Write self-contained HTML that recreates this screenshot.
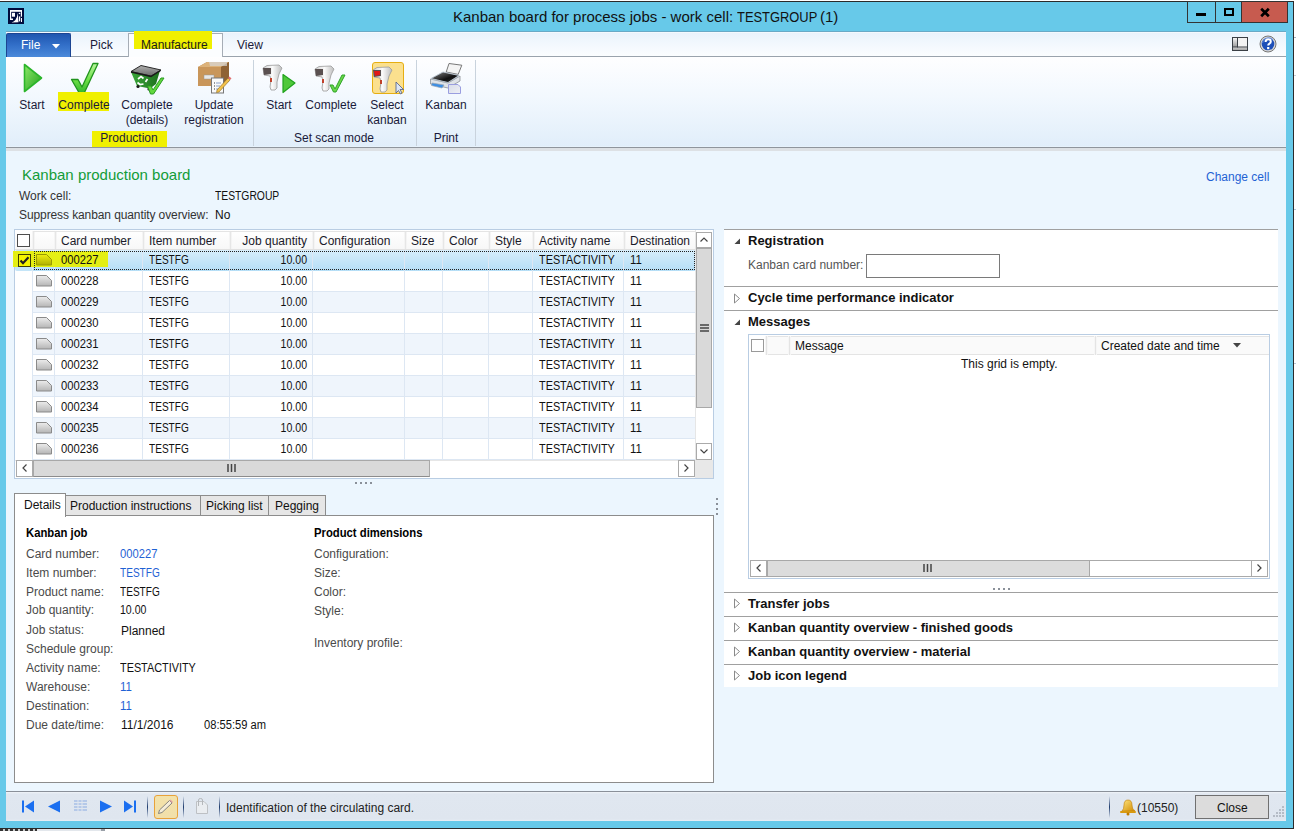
<!DOCTYPE html>
<html><head><meta charset="utf-8">
<style>
*{margin:0;padding:0;box-sizing:border-box}
html,body{width:1296px;height:831px;overflow:hidden;background:#fff;font-family:"Liberation Sans",sans-serif;font-size:12px;color:#1e1e1e}
.a{position:absolute;white-space:nowrap}
svg{position:absolute;overflow:visible}
#win{position:absolute;left:0;top:1px;width:1294px;height:828px;background:#67c9e9;border-top:1px solid #2b2b2b;border-right:1px solid #2b2b2b;border-bottom:1px solid #2b2b2b}
.rl{position:absolute;text-align:center;line-height:15px;color:#1a1a3a}
.hd{color:#1a1a2a}
.cell{color:#111}
.gl{position:absolute;text-align:center;line-height:15px;color:#1a1a3a}
</style></head><body>
<div id="win"></div>
<!-- title bar -->
<svg style="left:8px;top:8px" width="16" height="16" viewBox="0 0 16 16">
<rect x="0" y="0" width="16" height="16" fill="#000c3c"/>
<rect x="2" y="2" width="12" height="1.8" fill="#fff"/>
<rect x="2" y="2" width="1.2" height="10" fill="#fff"/>
<rect x="2" y="10.5" width="3" height="1.5" fill="#fff"/>
<rect x="12.8" y="2" width="1.2" height="6.7" fill="#fff"/>
<rect x="4" y="4.8" width="3" height="3.9" fill="#fff"/>
<path d="M3.4 14.6 Q8.5 13.5 9.9 5 L10.5 14.2 Z" fill="#fff"/>
<rect x="11" y="8.4" width="1.2" height="5" fill="#fff"/>
<rect x="13" y="10" width="1" height="4" fill="#fff"/>
<circle cx="11.5" cy="5.5" r=".8" fill="#fff"/>
</svg>
<div class="a" id="title" style="left:453px;top:7.5px;font-size:15px;color:#111">Kanban board for process jobs - work cell:</div>
<div class="a" style="left:737px;top:7.5px;font-size:15px;color:#111;transform:scaleX(.845);transform-origin:left top;--p:1;transform:scaleX(0.86);transform-origin:left top">TESTGROUP</div>
<div class="a" style="left:820px;top:7.5px;font-size:15px;color:#111">(1)</div>
<div class="a" style="left:1187px;top:1px;width:29px;height:22px;border:1px solid #333;background:#67c9e9"></div>
<div class="a" style="left:1215px;top:1px;width:27px;height:22px;border:1px solid #333;background:#67c9e9"></div>
<div class="a" style="left:1241px;top:1px;width:47px;height:22px;border:1px solid #333;background:#c75b4f"></div>
<div class="a" style="left:1196px;top:13px;width:10px;height:3px;background:#000"></div>
<div class="a" style="left:1224px;top:8px;width:10px;height:8px;border:2px solid #000"></div>
<svg style="left:1260px;top:7.5px" width="10" height="9" viewBox="0 0 10 9"><path d="M1.2 0.8 L8.8 8.2 M8.8 0.8 L1.2 8.2" stroke="#000" stroke-width="2.7"/></svg>

<!-- content bg -->
<div class="a" style="left:6px;top:31px;width:1280px;height:790px;background:#ecf6fe"></div>
<!-- tab bar -->
<div class="a" style="left:6px;top:31px;width:1280px;height:26px;background:linear-gradient(#fff,#fff 1px,#eaf3fc 2px,#fbfdff);border-bottom:1px solid #9aa3ad"></div>
<div class="a" style="left:6px;top:31px;width:1280px;height:1px;background:#6aa9c6"></div>
<div class="a" style="left:6px;top:33px;width:65px;height:24px;background:linear-gradient(#1f56b0,#3370c9 50%,#4c8ada);border:1px solid #1b4592;border-bottom:none;border-radius:2px 2px 0 0"></div>
<div class="a" style="left:21px;top:38px;font-size:12px;color:#fff">File</div>
<svg style="left:52px;top:44px" width="8" height="5"><path d="M0 0h8L4 4.5z" fill="#fff"/></svg>
<div class="a" style="left:90px;top:38px;font-size:12px;color:#1a1a3a">Pick</div>
<div class="a" style="left:128px;top:33px;width:95px;height:25px;background:#fbfdff;border:1px solid #a6adb6;border-bottom:none"></div>
<div class="a" style="left:134px;top:31px;width:78px;height:18px;background:#f0f000"></div>
<div class="a" style="left:141px;top:38px;font-size:12px;color:#1a1a1a">Manufacture</div>
<div class="a" style="left:237px;top:38px;font-size:12px;color:#1a1a3a">View</div>
<!-- layout icon -->
<svg style="left:1232px;top:37px" width="16" height="14" viewBox="0 0 16 14">
<defs><linearGradient id="lb" x1="0" y1="0" x2="0" y2="1"><stop offset="0" stop-color="#f4f4f4"/><stop offset="1" stop-color="#9a9a9a"/></linearGradient>
<linearGradient id="bb" x1="0" y1="0" x2="0" y2="1"><stop offset="0" stop-color="#c8c8c8"/><stop offset="1" stop-color="#a8a8a8"/></linearGradient></defs>
<rect x="0.5" y="0.5" width="15" height="13" fill="#f2f2f2" stroke="#3a3f45"/>
<rect x="1" y="1" width="4" height="9" fill="url(#lb)"/>
<rect x="1" y="10.5" width="14" height="2.5" fill="url(#bb)"/>
<path d="M5.5 1v9.5M1 10h14" stroke="#3a3f45" fill="none"/>
</svg>
<!-- help icon -->
<svg style="left:1259px;top:35px" width="18" height="18" viewBox="0 0 18 18">
<circle cx="9" cy="9" r="8" fill="#d8d8d8" stroke="#777" stroke-width="1"/>
<circle cx="9" cy="9" r="6.3" fill="#1d4fb8"/>
<path d="M3.5 8 A6 6 0 0 1 14 5" stroke="#6d95e0" stroke-width="1.5" fill="none" opacity=".6"/>
<path d="M6.6 7 Q6.6 4.3 9.2 4.3 Q11.8 4.3 11.8 6.6 Q11.8 8 10.2 8.8 Q9.2 9.4 9.2 10.6" stroke="#fff" stroke-width="2" fill="none"/>
<rect x="8.1" y="12" width="2.2" height="2.2" fill="#fff"/>
</svg>

<!-- ribbon -->
<div class="a" style="left:6px;top:57px;width:1280px;height:90px;background:linear-gradient(#fefeff,#f2f8fe 45%,#e1eefa 99%,#eef7fd)"></div>
<div class="a" style="left:6px;top:147px;width:1280px;height:1px;background:#8f959c"></div>
<div class="a" style="left:6px;top:148px;width:1280px;height:3px;background:#dde1e5"></div>
<div class="a" style="left:253px;top:60px;width:1px;height:86px;background:#c9d3dd"></div>
<div class="a" style="left:416px;top:60px;width:1px;height:86px;background:#c9d3dd"></div>
<div class="a" style="left:475px;top:60px;width:1px;height:86px;background:#c9d3dd"></div>

<!-- start icon -->
<svg style="left:22px;top:62px" width="22" height="32" viewBox="0 0 22 32">
<defs><linearGradient id="gp" x1="0" y1="0" x2="1" y2="1"><stop offset="0" stop-color="#8ee86a"/><stop offset="1" stop-color="#1fa01a"/></linearGradient></defs>
<path d="M2.5 2.5 L19.5 16 L2.5 29.5 Z" fill="url(#gp)" stroke="#2bb52a" stroke-width="1.6" stroke-linejoin="round"/>
</svg>
<!-- complete check -->
<svg style="left:70px;top:62px" width="30" height="33" viewBox="0 0 30 33">
<defs><linearGradient id="gc" x1="0" y1="0" x2="0" y2="1"><stop offset="0" stop-color="#b8f59e"/><stop offset=".55" stop-color="#6ee046"/><stop offset="1" stop-color="#2eb42a"/></linearGradient></defs>
<path d="M1.5 17.5 L8 17.5 L12 25 L23 1.5 L28 1.5 L14 31.5 L9.5 31.5 Z" fill="url(#gc)" stroke="#21931e" stroke-width="1.3" stroke-linejoin="round"/>
</svg>
<!-- dumpster icon -->
<svg style="left:129px;top:63px" width="36" height="33" viewBox="0 0 36 33">
<defs><linearGradient id="dg" x1="0" y1="0" x2="1" y2="0"><stop offset="0" stop-color="#3aa83a"/><stop offset="1" stop-color="#1d6e1d"/></linearGradient>
<linearGradient id="lg" x1="0" y1="0" x2="0" y2="1"><stop offset="0" stop-color="#b0b0b0"/><stop offset="1" stop-color="#6a6a6a"/></linearGradient></defs>
<path d="M2 9 L22 13 L31 7.5 L27 21 L21 25.5 L8 23 Z" fill="url(#dg)"/>
<path d="M2 8.5 L12 2.5 L32 7 L22 13 Z" fill="url(#lg)" stroke="#2a2a2a" stroke-width="1"/>
<path d="M2 9 L22 13.5 L31.5 7.5" stroke="#1a1a1a" stroke-width="1.4" fill="none"/>
<path d="M9 16 l3 -2.5 l2.5 2 M8.5 19.5 l2.5 2 l3.5 -0.5 M16.5 19 l2 -3" stroke="#fff" stroke-width="1.7" fill="none"/>
<circle cx="9" cy="23.5" r="1.6" fill="#1a1a1a"/><circle cx="20" cy="26" r="1.6" fill="#1a1a1a"/>
<path d="M18.5 23 L22 23 L24 27 L32 15 L35 15 L24.5 31 L21.5 31 Z" fill="#62d83e" stroke="#2a9a22" stroke-width="1"/>
</svg>
<!-- box icon -->
<svg style="left:197px;top:61px" width="36" height="34" viewBox="0 0 36 34">
<path d="M1 6 L10 1 L32 1 L32 20 L24 25 L1 25 Z" fill="#b9844a"/>
<path d="M1 6 L10 1 L32 1 L24 6 Z" fill="#dcb27a"/>
<path d="M24 6 L32 1 L32 20 L24 25 Z" fill="#8f6234"/>
<rect x="1" y="6" width="23" height="19" fill="#c9965a"/>
<rect x="7" y="14" width="10" height="4" fill="#e8e8e8" stroke="#999" stroke-width=".5"/>
<path d="M12 1 L30 1 L30 5 L13 5Z" fill="#d6d6d6" opacity=".7"/>
<rect x="14.5" y="17" width="12" height="15" fill="#fafafa" stroke="#777" stroke-width="1"/>
<path d="M17 22h1M17 25h1M17 28h1" stroke="#333"/>
<path d="M19 22h5M19 25h4M19 28h3" stroke="#8aa0c8"/>
<path d="M20 29 L31 17 L33 19 L22 31 L19.5 31.5 Z" fill="#f2c14a" stroke="#8a6a22" stroke-width=".6"/>
<path d="M31 17 L33 19 L34.5 17.5 L32.5 15.5Z" fill="#e07070"/>
</svg>
<div class="rl" style="left:12px;top:98px;width:40px">Start</div>
<div class="a" style="left:58px;top:92px;width:51px;height:19px;background:#f0f000"></div>
<div class="rl" style="left:54px;top:98px;width:60px">Complete</div>
<div class="rl" style="left:112px;top:98px;width:70px">Complete<br>(details)</div>
<div class="rl" style="left:179px;top:98px;width:70px">Update<br>registration</div>
<div class="a" style="left:92px;top:131px;width:75px;height:16px;background:#f0f000"></div>
<div class="gl" style="left:89px;top:131px;width:80px">Production</div>

<!-- scanner icons -->
<svg style="left:262px;top:64px" width="36" height="30" viewBox="0 0 36 30">
<defs><linearGradient id="sc" x1="0" y1="0" x2="1" y2="0"><stop offset="0" stop-color="#cfcfcf"/><stop offset=".5" stop-color="#fafafa"/><stop offset="1" stop-color="#bdbdbd"/></linearGradient></defs>
<path d="M1 4 L5 1.5 L17 1 L20 4 L17 10 L15 18 L15 24 L13 26 L9 26 L8 23 L9 16 L8 12 L2 11 Z" fill="url(#sc)" stroke="#9a9a9a" stroke-width=".8"/>
<path d="M1 4 L9 4 L9 10 L2 11 Z" fill="#5a5050"/>
<rect x="8" y="14" width="2" height="4" fill="#c0402a"/>
<path d="M21 10.5 L33 19 L21 28.5 Z" fill="#4fc83a" stroke="#21a31e" stroke-width="1.2" stroke-linejoin="round"/>
</svg>
<svg style="left:314px;top:65px" width="36" height="30" viewBox="0 0 36 30">
<path d="M1 4 L5 1.5 L17 1 L20 4 L17 10 L15 18 L15 24 L13 26 L9 26 L8 23 L9 16 L8 12 L2 11 Z" fill="url(#sc)" stroke="#9a9a9a" stroke-width=".8"/>
<path d="M1 4 L9 4 L9 10 L2 11 Z" fill="#5a5050"/>
<rect x="8" y="14" width="2" height="4" fill="#c0402a"/>
<path d="M16 20 L19 20 L21 24 L28 10 L31 10 L22 27 L19.5 27 Z" fill="#6ad64a" stroke="#2ea52a" stroke-width="1"/>
</svg>
<div class="a" style="left:372px;top:62px;width:32px;height:32px;background:#fbe08e;border:1px solid #e6ae12;border-radius:3px"></div>
<svg style="left:372px;top:66px" width="34" height="28" viewBox="0 0 34 28">
<path d="M1 4 L5 1.5 L17 1 L20 4 L17 10 L15 18 L15 24 L13 26 L9 26 L8 23 L9 16 L8 12 L2 11 Z" fill="url(#sc)" stroke="#9a9a9a" stroke-width=".8"/>
<path d="M1 4 L9 4 L9 10 L2 11 Z" fill="#5a5050"/>
<path d="M2 5 L8 5 L8 9 L3 10Z" fill="#e01818"/>
<rect x="8" y="14" width="2" height="4" fill="#c0402a"/>
<path d="M24 16 L24 27 L26.5 24.5 L28.5 28 L30 27 L28 23.5 L31.5 23.5 Z" fill="#dde6f5" stroke="#4a5a8a" stroke-width=".8"/>
</svg>
<!-- printer -->
<svg style="left:429px;top:62px" width="34" height="33" viewBox="0 0 34 33">
<defs><linearGradient id="pt" x1="0" y1="0" x2="1" y2="1"><stop offset="0" stop-color="#8a8a8a"/><stop offset=".6" stop-color="#111"/><stop offset="1" stop-color="#333"/></linearGradient>
<linearGradient id="pd" x1="0" y1="0" x2="1" y2="1"><stop offset="0" stop-color="#d8dce8"/><stop offset="1" stop-color="#eef0f6"/></linearGradient></defs>
<path d="M20 1.5 L32.8 3.2 L29.2 12.4 L17.2 10 Z" fill="#f4f4f4" stroke="#6a6a6a" stroke-width=".9"/>
<path d="M1.5 17 L19 21 L31 14 L31 19 L19 26 L1.5 22 Z" fill="#dfe3e8" stroke="#8a8f96" stroke-width=".8"/>
<path d="M2 16.5 L14 10 L30 13.5 L19 20.5 Z" fill="url(#pt)" stroke="#b8c4d0" stroke-width=".9"/>
<path d="M3 21 L15 23 L13 26 L2.5 23.5 Z" fill="#3a8ee6" stroke="#9aa4b0" stroke-width=".7"/>
<path d="M19.5 22.5 H29 L31.5 25 V31.5 H19.5 Z" fill="url(#pd)" stroke="#9a9ee0" stroke-width="1"/>
</svg>
<div class="rl" style="left:259px;top:98px;width:40px">Start</div>
<div class="rl" style="left:301px;top:98px;width:60px">Complete</div>
<div class="rl" style="left:357px;top:98px;width:60px">Select<br>kanban</div>
<div class="gl" style="left:284px;top:131px;width:100px">Set scan mode</div>
<div class="rl" style="left:421px;top:98px;width:50px">Kanban</div>
<div class="gl" style="left:426px;top:131px;width:40px">Print</div>

<!-- page header -->
<div class="a" style="left:22px;top:166px;font-size:15px;color:#139c38">Kanban production board</div>
<div class="a" style="left:19px;top:189px;color:#333">Work cell:</div>
<div class="a" style="left:215px;top:189px;color:#111;--p:1;transform:scaleX(0.86);transform-origin:left top">TESTGROUP</div>
<div class="a" style="left:19px;top:208px;color:#333;letter-spacing:-0.1px">Suppress kanban quantity overview:</div>
<div class="a" style="left:215px;top:208px;color:#111">No</div>
<div class="a" style="left:1206px;top:170px;color:#1f62d4">Change cell</div>

<!-- main grid -->
<div class="a" style="left:14px;top:229px;width:700px;height:250px;background:#fff;border:1px solid #b9cde3"></div>
<div id="grid"></div>
<div class="a" style="left:15px;top:230px;width:680px;height:20px;background:linear-gradient(#fff,#f7f7f7)"></div>
<div class="a" style="left:32px;top:231px;width:3px;height:18px;background:#e6e6e6;border-left:1px solid #f4f4f4;border-right:1px solid #f4f4f4"></div>
<div class="a" style="left:54px;top:231px;width:3px;height:18px;background:#e6e6e6;border-left:1px solid #f4f4f4;border-right:1px solid #f4f4f4"></div>
<div class="a" style="left:142px;top:231px;width:3px;height:18px;background:#e6e6e6;border-left:1px solid #f4f4f4;border-right:1px solid #f4f4f4"></div>
<div class="a" style="left:229px;top:231px;width:3px;height:18px;background:#e6e6e6;border-left:1px solid #f4f4f4;border-right:1px solid #f4f4f4"></div>
<div class="a" style="left:312px;top:231px;width:3px;height:18px;background:#e6e6e6;border-left:1px solid #f4f4f4;border-right:1px solid #f4f4f4"></div>
<div class="a" style="left:404px;top:231px;width:3px;height:18px;background:#e6e6e6;border-left:1px solid #f4f4f4;border-right:1px solid #f4f4f4"></div>
<div class="a" style="left:442px;top:231px;width:3px;height:18px;background:#e6e6e6;border-left:1px solid #f4f4f4;border-right:1px solid #f4f4f4"></div>
<div class="a" style="left:488px;top:231px;width:3px;height:18px;background:#e6e6e6;border-left:1px solid #f4f4f4;border-right:1px solid #f4f4f4"></div>
<div class="a" style="left:532px;top:231px;width:3px;height:18px;background:#e6e6e6;border-left:1px solid #f4f4f4;border-right:1px solid #f4f4f4"></div>
<div class="a" style="left:623px;top:231px;width:3px;height:18px;background:#e6e6e6;border-left:1px solid #f4f4f4;border-right:1px solid #f4f4f4"></div>
<div class="a" style="left:33px;top:231px;width:662px;height:1px;background:#e4e4e4"></div>
<div class="a" style="left:15px;top:249px;width:680px;height:1px;background:#e1e1e1"></div>
<div class="a hd" style="left:61px;top:234px">Card number</div>
<div class="a hd" style="left:149px;top:234px">Item number</div>
<div class="a hd" style="left:230px;top:234px;width:77px;text-align:right">Job quantity</div>
<div class="a hd" style="left:319px;top:234px">Configuration</div>
<div class="a hd" style="left:411px;top:234px">Size</div>
<div class="a hd" style="left:449px;top:234px">Color</div>
<div class="a hd" style="left:495px;top:234px">Style</div>
<div class="a hd" style="left:539px;top:234px">Activity name</div>
<div class="a hd" style="left:630px;top:234px">Destination</div>
<div class="a" style="left:17px;top:234px;width:13px;height:13px;border:1px solid #4d4d4d;background:#fff"></div>
<div class="a" style="left:33px;top:250px;width:662px;height:21px;background:linear-gradient(#d7eefb,#b5def6)"></div>
<div class="a" style="left:15px;top:250px;width:18px;height:21px;background:#c4e5f8;border-radius:2px"></div>
<div class="a" style="left:54px;top:250px;width:1px;height:21px;background:#dde7f3"></div>
<div class="a" style="left:142px;top:250px;width:1px;height:21px;background:#dde7f3"></div>
<div class="a" style="left:229px;top:250px;width:1px;height:21px;background:#dde7f3"></div>
<div class="a" style="left:312px;top:250px;width:1px;height:21px;background:#dde7f3"></div>
<div class="a" style="left:404px;top:250px;width:1px;height:21px;background:#dde7f3"></div>
<div class="a" style="left:442px;top:250px;width:1px;height:21px;background:#dde7f3"></div>
<div class="a" style="left:488px;top:250px;width:1px;height:21px;background:#dde7f3"></div>
<div class="a" style="left:532px;top:250px;width:1px;height:21px;background:#dde7f3"></div>
<div class="a" style="left:623px;top:250px;width:1px;height:21px;background:#dde7f3"></div>
<div class="a" style="left:32px;top:250px;width:1px;height:21px;background:#dde7f3"></div>
<svg style="left:36px;top:254px" width="16" height="12" viewBox="0 0 16 12"><defs><linearGradient id="ci0" x1="0" y1="0" x2="0" y2="1"><stop offset="0" stop-color="#efef10"/><stop offset="1" stop-color="#b0b000"/></linearGradient></defs><path d="M0.5 0.5 H10.5 L15.5 5.5 V11 H0.5 Z" fill="url(#ci0)" stroke="#9a9a00" stroke-width="1"/></svg>
<div class="a cell" style="left:61px;top:253px;--p:1;transform:scaleX(0.935);transform-origin:left top">000227</div>
<div class="a cell" style="left:149px;top:253px;--p:1;transform:scaleX(0.84);transform-origin:left top">TESTFG</div>
<div class="a cell" style="left:230px;top:253px;width:77px;text-align:right;--p:1;transform:scaleX(0.88);transform-origin:right top">10.00</div>
<div class="a cell" style="left:539px;top:253px;--p:1;transform:scaleX(0.905);transform-origin:left top">TESTACTIVITY</div>
<div class="a cell" style="left:630px;top:253px;--p:1;transform:scaleX(0.95);transform-origin:left top">11</div>
<div class="a" style="left:33px;top:291px;width:662px;height:1px;background:#dde7f3"></div>
<div class="a" style="left:54px;top:271px;width:1px;height:21px;background:#dde7f3"></div>
<div class="a" style="left:142px;top:271px;width:1px;height:21px;background:#dde7f3"></div>
<div class="a" style="left:229px;top:271px;width:1px;height:21px;background:#dde7f3"></div>
<div class="a" style="left:312px;top:271px;width:1px;height:21px;background:#dde7f3"></div>
<div class="a" style="left:404px;top:271px;width:1px;height:21px;background:#dde7f3"></div>
<div class="a" style="left:442px;top:271px;width:1px;height:21px;background:#dde7f3"></div>
<div class="a" style="left:488px;top:271px;width:1px;height:21px;background:#dde7f3"></div>
<div class="a" style="left:532px;top:271px;width:1px;height:21px;background:#dde7f3"></div>
<div class="a" style="left:623px;top:271px;width:1px;height:21px;background:#dde7f3"></div>
<div class="a" style="left:32px;top:271px;width:1px;height:21px;background:#dde7f3"></div>
<svg style="left:36px;top:275px" width="16" height="12" viewBox="0 0 16 12"><defs><linearGradient id="ci1" x1="0" y1="0" x2="0" y2="1"><stop offset="0" stop-color="#ececec"/><stop offset="1" stop-color="#b5b5b5"/></linearGradient></defs><path d="M0.5 0.5 H10.5 L15.5 5.5 V11 H0.5 Z" fill="url(#ci1)" stroke="#8a8a8a" stroke-width="1"/></svg>
<div class="a cell" style="left:61px;top:274px;--p:1;transform:scaleX(0.935);transform-origin:left top">000228</div>
<div class="a cell" style="left:149px;top:274px;--p:1;transform:scaleX(0.84);transform-origin:left top">TESTFG</div>
<div class="a cell" style="left:230px;top:274px;width:77px;text-align:right;--p:1;transform:scaleX(0.88);transform-origin:right top">10.00</div>
<div class="a cell" style="left:539px;top:274px;--p:1;transform:scaleX(0.905);transform-origin:left top">TESTACTIVITY</div>
<div class="a cell" style="left:630px;top:274px;--p:1;transform:scaleX(0.95);transform-origin:left top">11</div>
<div class="a" style="left:33px;top:292px;width:662px;height:21px;background:#eff5fc"></div>
<div class="a" style="left:33px;top:312px;width:662px;height:1px;background:#dde7f3"></div>
<div class="a" style="left:54px;top:292px;width:1px;height:21px;background:#dde7f3"></div>
<div class="a" style="left:142px;top:292px;width:1px;height:21px;background:#dde7f3"></div>
<div class="a" style="left:229px;top:292px;width:1px;height:21px;background:#dde7f3"></div>
<div class="a" style="left:312px;top:292px;width:1px;height:21px;background:#dde7f3"></div>
<div class="a" style="left:404px;top:292px;width:1px;height:21px;background:#dde7f3"></div>
<div class="a" style="left:442px;top:292px;width:1px;height:21px;background:#dde7f3"></div>
<div class="a" style="left:488px;top:292px;width:1px;height:21px;background:#dde7f3"></div>
<div class="a" style="left:532px;top:292px;width:1px;height:21px;background:#dde7f3"></div>
<div class="a" style="left:623px;top:292px;width:1px;height:21px;background:#dde7f3"></div>
<div class="a" style="left:32px;top:292px;width:1px;height:21px;background:#dde7f3"></div>
<svg style="left:36px;top:296px" width="16" height="12" viewBox="0 0 16 12"><defs><linearGradient id="ci2" x1="0" y1="0" x2="0" y2="1"><stop offset="0" stop-color="#ececec"/><stop offset="1" stop-color="#b5b5b5"/></linearGradient></defs><path d="M0.5 0.5 H10.5 L15.5 5.5 V11 H0.5 Z" fill="url(#ci2)" stroke="#8a8a8a" stroke-width="1"/></svg>
<div class="a cell" style="left:61px;top:295px;--p:1;transform:scaleX(0.935);transform-origin:left top">000229</div>
<div class="a cell" style="left:149px;top:295px;--p:1;transform:scaleX(0.84);transform-origin:left top">TESTFG</div>
<div class="a cell" style="left:230px;top:295px;width:77px;text-align:right;--p:1;transform:scaleX(0.88);transform-origin:right top">10.00</div>
<div class="a cell" style="left:539px;top:295px;--p:1;transform:scaleX(0.905);transform-origin:left top">TESTACTIVITY</div>
<div class="a cell" style="left:630px;top:295px;--p:1;transform:scaleX(0.95);transform-origin:left top">11</div>
<div class="a" style="left:33px;top:333px;width:662px;height:1px;background:#dde7f3"></div>
<div class="a" style="left:54px;top:313px;width:1px;height:21px;background:#dde7f3"></div>
<div class="a" style="left:142px;top:313px;width:1px;height:21px;background:#dde7f3"></div>
<div class="a" style="left:229px;top:313px;width:1px;height:21px;background:#dde7f3"></div>
<div class="a" style="left:312px;top:313px;width:1px;height:21px;background:#dde7f3"></div>
<div class="a" style="left:404px;top:313px;width:1px;height:21px;background:#dde7f3"></div>
<div class="a" style="left:442px;top:313px;width:1px;height:21px;background:#dde7f3"></div>
<div class="a" style="left:488px;top:313px;width:1px;height:21px;background:#dde7f3"></div>
<div class="a" style="left:532px;top:313px;width:1px;height:21px;background:#dde7f3"></div>
<div class="a" style="left:623px;top:313px;width:1px;height:21px;background:#dde7f3"></div>
<div class="a" style="left:32px;top:313px;width:1px;height:21px;background:#dde7f3"></div>
<svg style="left:36px;top:317px" width="16" height="12" viewBox="0 0 16 12"><defs><linearGradient id="ci3" x1="0" y1="0" x2="0" y2="1"><stop offset="0" stop-color="#ececec"/><stop offset="1" stop-color="#b5b5b5"/></linearGradient></defs><path d="M0.5 0.5 H10.5 L15.5 5.5 V11 H0.5 Z" fill="url(#ci3)" stroke="#8a8a8a" stroke-width="1"/></svg>
<div class="a cell" style="left:61px;top:316px;--p:1;transform:scaleX(0.935);transform-origin:left top">000230</div>
<div class="a cell" style="left:149px;top:316px;--p:1;transform:scaleX(0.84);transform-origin:left top">TESTFG</div>
<div class="a cell" style="left:230px;top:316px;width:77px;text-align:right;--p:1;transform:scaleX(0.88);transform-origin:right top">10.00</div>
<div class="a cell" style="left:539px;top:316px;--p:1;transform:scaleX(0.905);transform-origin:left top">TESTACTIVITY</div>
<div class="a cell" style="left:630px;top:316px;--p:1;transform:scaleX(0.95);transform-origin:left top">11</div>
<div class="a" style="left:33px;top:334px;width:662px;height:21px;background:#eff5fc"></div>
<div class="a" style="left:33px;top:354px;width:662px;height:1px;background:#dde7f3"></div>
<div class="a" style="left:54px;top:334px;width:1px;height:21px;background:#dde7f3"></div>
<div class="a" style="left:142px;top:334px;width:1px;height:21px;background:#dde7f3"></div>
<div class="a" style="left:229px;top:334px;width:1px;height:21px;background:#dde7f3"></div>
<div class="a" style="left:312px;top:334px;width:1px;height:21px;background:#dde7f3"></div>
<div class="a" style="left:404px;top:334px;width:1px;height:21px;background:#dde7f3"></div>
<div class="a" style="left:442px;top:334px;width:1px;height:21px;background:#dde7f3"></div>
<div class="a" style="left:488px;top:334px;width:1px;height:21px;background:#dde7f3"></div>
<div class="a" style="left:532px;top:334px;width:1px;height:21px;background:#dde7f3"></div>
<div class="a" style="left:623px;top:334px;width:1px;height:21px;background:#dde7f3"></div>
<div class="a" style="left:32px;top:334px;width:1px;height:21px;background:#dde7f3"></div>
<svg style="left:36px;top:338px" width="16" height="12" viewBox="0 0 16 12"><defs><linearGradient id="ci4" x1="0" y1="0" x2="0" y2="1"><stop offset="0" stop-color="#ececec"/><stop offset="1" stop-color="#b5b5b5"/></linearGradient></defs><path d="M0.5 0.5 H10.5 L15.5 5.5 V11 H0.5 Z" fill="url(#ci4)" stroke="#8a8a8a" stroke-width="1"/></svg>
<div class="a cell" style="left:61px;top:337px;--p:1;transform:scaleX(0.935);transform-origin:left top">000231</div>
<div class="a cell" style="left:149px;top:337px;--p:1;transform:scaleX(0.84);transform-origin:left top">TESTFG</div>
<div class="a cell" style="left:230px;top:337px;width:77px;text-align:right;--p:1;transform:scaleX(0.88);transform-origin:right top">10.00</div>
<div class="a cell" style="left:539px;top:337px;--p:1;transform:scaleX(0.905);transform-origin:left top">TESTACTIVITY</div>
<div class="a cell" style="left:630px;top:337px;--p:1;transform:scaleX(0.95);transform-origin:left top">11</div>
<div class="a" style="left:33px;top:375px;width:662px;height:1px;background:#dde7f3"></div>
<div class="a" style="left:54px;top:355px;width:1px;height:21px;background:#dde7f3"></div>
<div class="a" style="left:142px;top:355px;width:1px;height:21px;background:#dde7f3"></div>
<div class="a" style="left:229px;top:355px;width:1px;height:21px;background:#dde7f3"></div>
<div class="a" style="left:312px;top:355px;width:1px;height:21px;background:#dde7f3"></div>
<div class="a" style="left:404px;top:355px;width:1px;height:21px;background:#dde7f3"></div>
<div class="a" style="left:442px;top:355px;width:1px;height:21px;background:#dde7f3"></div>
<div class="a" style="left:488px;top:355px;width:1px;height:21px;background:#dde7f3"></div>
<div class="a" style="left:532px;top:355px;width:1px;height:21px;background:#dde7f3"></div>
<div class="a" style="left:623px;top:355px;width:1px;height:21px;background:#dde7f3"></div>
<div class="a" style="left:32px;top:355px;width:1px;height:21px;background:#dde7f3"></div>
<svg style="left:36px;top:359px" width="16" height="12" viewBox="0 0 16 12"><defs><linearGradient id="ci5" x1="0" y1="0" x2="0" y2="1"><stop offset="0" stop-color="#ececec"/><stop offset="1" stop-color="#b5b5b5"/></linearGradient></defs><path d="M0.5 0.5 H10.5 L15.5 5.5 V11 H0.5 Z" fill="url(#ci5)" stroke="#8a8a8a" stroke-width="1"/></svg>
<div class="a cell" style="left:61px;top:358px;--p:1;transform:scaleX(0.935);transform-origin:left top">000232</div>
<div class="a cell" style="left:149px;top:358px;--p:1;transform:scaleX(0.84);transform-origin:left top">TESTFG</div>
<div class="a cell" style="left:230px;top:358px;width:77px;text-align:right;--p:1;transform:scaleX(0.88);transform-origin:right top">10.00</div>
<div class="a cell" style="left:539px;top:358px;--p:1;transform:scaleX(0.905);transform-origin:left top">TESTACTIVITY</div>
<div class="a cell" style="left:630px;top:358px;--p:1;transform:scaleX(0.95);transform-origin:left top">11</div>
<div class="a" style="left:33px;top:376px;width:662px;height:21px;background:#eff5fc"></div>
<div class="a" style="left:33px;top:396px;width:662px;height:1px;background:#dde7f3"></div>
<div class="a" style="left:54px;top:376px;width:1px;height:21px;background:#dde7f3"></div>
<div class="a" style="left:142px;top:376px;width:1px;height:21px;background:#dde7f3"></div>
<div class="a" style="left:229px;top:376px;width:1px;height:21px;background:#dde7f3"></div>
<div class="a" style="left:312px;top:376px;width:1px;height:21px;background:#dde7f3"></div>
<div class="a" style="left:404px;top:376px;width:1px;height:21px;background:#dde7f3"></div>
<div class="a" style="left:442px;top:376px;width:1px;height:21px;background:#dde7f3"></div>
<div class="a" style="left:488px;top:376px;width:1px;height:21px;background:#dde7f3"></div>
<div class="a" style="left:532px;top:376px;width:1px;height:21px;background:#dde7f3"></div>
<div class="a" style="left:623px;top:376px;width:1px;height:21px;background:#dde7f3"></div>
<div class="a" style="left:32px;top:376px;width:1px;height:21px;background:#dde7f3"></div>
<svg style="left:36px;top:380px" width="16" height="12" viewBox="0 0 16 12"><defs><linearGradient id="ci6" x1="0" y1="0" x2="0" y2="1"><stop offset="0" stop-color="#ececec"/><stop offset="1" stop-color="#b5b5b5"/></linearGradient></defs><path d="M0.5 0.5 H10.5 L15.5 5.5 V11 H0.5 Z" fill="url(#ci6)" stroke="#8a8a8a" stroke-width="1"/></svg>
<div class="a cell" style="left:61px;top:379px;--p:1;transform:scaleX(0.935);transform-origin:left top">000233</div>
<div class="a cell" style="left:149px;top:379px;--p:1;transform:scaleX(0.84);transform-origin:left top">TESTFG</div>
<div class="a cell" style="left:230px;top:379px;width:77px;text-align:right;--p:1;transform:scaleX(0.88);transform-origin:right top">10.00</div>
<div class="a cell" style="left:539px;top:379px;--p:1;transform:scaleX(0.905);transform-origin:left top">TESTACTIVITY</div>
<div class="a cell" style="left:630px;top:379px;--p:1;transform:scaleX(0.95);transform-origin:left top">11</div>
<div class="a" style="left:33px;top:417px;width:662px;height:1px;background:#dde7f3"></div>
<div class="a" style="left:54px;top:397px;width:1px;height:21px;background:#dde7f3"></div>
<div class="a" style="left:142px;top:397px;width:1px;height:21px;background:#dde7f3"></div>
<div class="a" style="left:229px;top:397px;width:1px;height:21px;background:#dde7f3"></div>
<div class="a" style="left:312px;top:397px;width:1px;height:21px;background:#dde7f3"></div>
<div class="a" style="left:404px;top:397px;width:1px;height:21px;background:#dde7f3"></div>
<div class="a" style="left:442px;top:397px;width:1px;height:21px;background:#dde7f3"></div>
<div class="a" style="left:488px;top:397px;width:1px;height:21px;background:#dde7f3"></div>
<div class="a" style="left:532px;top:397px;width:1px;height:21px;background:#dde7f3"></div>
<div class="a" style="left:623px;top:397px;width:1px;height:21px;background:#dde7f3"></div>
<div class="a" style="left:32px;top:397px;width:1px;height:21px;background:#dde7f3"></div>
<svg style="left:36px;top:401px" width="16" height="12" viewBox="0 0 16 12"><defs><linearGradient id="ci7" x1="0" y1="0" x2="0" y2="1"><stop offset="0" stop-color="#ececec"/><stop offset="1" stop-color="#b5b5b5"/></linearGradient></defs><path d="M0.5 0.5 H10.5 L15.5 5.5 V11 H0.5 Z" fill="url(#ci7)" stroke="#8a8a8a" stroke-width="1"/></svg>
<div class="a cell" style="left:61px;top:400px;--p:1;transform:scaleX(0.935);transform-origin:left top">000234</div>
<div class="a cell" style="left:149px;top:400px;--p:1;transform:scaleX(0.84);transform-origin:left top">TESTFG</div>
<div class="a cell" style="left:230px;top:400px;width:77px;text-align:right;--p:1;transform:scaleX(0.88);transform-origin:right top">10.00</div>
<div class="a cell" style="left:539px;top:400px;--p:1;transform:scaleX(0.905);transform-origin:left top">TESTACTIVITY</div>
<div class="a cell" style="left:630px;top:400px;--p:1;transform:scaleX(0.95);transform-origin:left top">11</div>
<div class="a" style="left:33px;top:418px;width:662px;height:21px;background:#eff5fc"></div>
<div class="a" style="left:33px;top:438px;width:662px;height:1px;background:#dde7f3"></div>
<div class="a" style="left:54px;top:418px;width:1px;height:21px;background:#dde7f3"></div>
<div class="a" style="left:142px;top:418px;width:1px;height:21px;background:#dde7f3"></div>
<div class="a" style="left:229px;top:418px;width:1px;height:21px;background:#dde7f3"></div>
<div class="a" style="left:312px;top:418px;width:1px;height:21px;background:#dde7f3"></div>
<div class="a" style="left:404px;top:418px;width:1px;height:21px;background:#dde7f3"></div>
<div class="a" style="left:442px;top:418px;width:1px;height:21px;background:#dde7f3"></div>
<div class="a" style="left:488px;top:418px;width:1px;height:21px;background:#dde7f3"></div>
<div class="a" style="left:532px;top:418px;width:1px;height:21px;background:#dde7f3"></div>
<div class="a" style="left:623px;top:418px;width:1px;height:21px;background:#dde7f3"></div>
<div class="a" style="left:32px;top:418px;width:1px;height:21px;background:#dde7f3"></div>
<svg style="left:36px;top:422px" width="16" height="12" viewBox="0 0 16 12"><defs><linearGradient id="ci8" x1="0" y1="0" x2="0" y2="1"><stop offset="0" stop-color="#ececec"/><stop offset="1" stop-color="#b5b5b5"/></linearGradient></defs><path d="M0.5 0.5 H10.5 L15.5 5.5 V11 H0.5 Z" fill="url(#ci8)" stroke="#8a8a8a" stroke-width="1"/></svg>
<div class="a cell" style="left:61px;top:421px;--p:1;transform:scaleX(0.935);transform-origin:left top">000235</div>
<div class="a cell" style="left:149px;top:421px;--p:1;transform:scaleX(0.84);transform-origin:left top">TESTFG</div>
<div class="a cell" style="left:230px;top:421px;width:77px;text-align:right;--p:1;transform:scaleX(0.88);transform-origin:right top">10.00</div>
<div class="a cell" style="left:539px;top:421px;--p:1;transform:scaleX(0.905);transform-origin:left top">TESTACTIVITY</div>
<div class="a cell" style="left:630px;top:421px;--p:1;transform:scaleX(0.95);transform-origin:left top">11</div>
<div class="a" style="left:33px;top:459px;width:662px;height:1px;background:#dde7f3"></div>
<div class="a" style="left:54px;top:439px;width:1px;height:21px;background:#dde7f3"></div>
<div class="a" style="left:142px;top:439px;width:1px;height:21px;background:#dde7f3"></div>
<div class="a" style="left:229px;top:439px;width:1px;height:21px;background:#dde7f3"></div>
<div class="a" style="left:312px;top:439px;width:1px;height:21px;background:#dde7f3"></div>
<div class="a" style="left:404px;top:439px;width:1px;height:21px;background:#dde7f3"></div>
<div class="a" style="left:442px;top:439px;width:1px;height:21px;background:#dde7f3"></div>
<div class="a" style="left:488px;top:439px;width:1px;height:21px;background:#dde7f3"></div>
<div class="a" style="left:532px;top:439px;width:1px;height:21px;background:#dde7f3"></div>
<div class="a" style="left:623px;top:439px;width:1px;height:21px;background:#dde7f3"></div>
<div class="a" style="left:32px;top:439px;width:1px;height:21px;background:#dde7f3"></div>
<svg style="left:36px;top:443px" width="16" height="12" viewBox="0 0 16 12"><defs><linearGradient id="ci9" x1="0" y1="0" x2="0" y2="1"><stop offset="0" stop-color="#ececec"/><stop offset="1" stop-color="#b5b5b5"/></linearGradient></defs><path d="M0.5 0.5 H10.5 L15.5 5.5 V11 H0.5 Z" fill="url(#ci9)" stroke="#8a8a8a" stroke-width="1"/></svg>
<div class="a cell" style="left:61px;top:442px;--p:1;transform:scaleX(0.935);transform-origin:left top">000236</div>
<div class="a cell" style="left:149px;top:442px;--p:1;transform:scaleX(0.84);transform-origin:left top">TESTFG</div>
<div class="a cell" style="left:230px;top:442px;width:77px;text-align:right;--p:1;transform:scaleX(0.88);transform-origin:right top">10.00</div>
<div class="a cell" style="left:539px;top:442px;--p:1;transform:scaleX(0.905);transform-origin:left top">TESTACTIVITY</div>
<div class="a cell" style="left:630px;top:442px;--p:1;transform:scaleX(0.95);transform-origin:left top">11</div>
<div class="a" style="left:13px;top:251px;width:95px;height:16px;background:rgba(230,240,0,0.92)"></div>
<div class="a" style="left:18px;top:254px;width:13px;height:13px;border:1px solid #3d3d00;background:#f4f400"></div>
<svg style="left:19px;top:256px" width="11" height="9" viewBox="0 0 11 9"><path d="M1.5 4.5 L4 7.2 L9.5 1.2" stroke="#222" stroke-width="2.2" fill="none"/></svg>
<svg style="left:36px;top:254px" width="16" height="12" viewBox="0 0 16 12"><path d="M0.5 0.5 H10.5 L15.5 5.5 V11 H0.5 Z" fill="url(#ci0)" stroke="#9a9a00" stroke-width="1"/></svg>
<div class="a cell" style="left:61px;top:253px;--p:1;transform:scaleX(0.935);transform-origin:left top">000227</div>
<div class="a" style="left:34px;top:251px;width:661px;height:19px;border:1px dotted #222"></div>
<div class="a" style="left:695px;top:230px;width:18px;height:230px;background:#fff;border-left:1px solid #e6e6e6"></div>
<div class="a" style="left:696px;top:232px;width:16px;height:16px;border:1px solid #aaa;background:#fff"></div>
<svg style="left:700px;top:237px" width="8" height="5"><path d="M0.5 4.5 L4 1 L7.5 4.5" stroke="#444" fill="none" stroke-width="1.2"/></svg>
<div class="a" style="left:696px;top:248px;width:16px;height:160px;background:#d9d9d9;border:1px solid #a8a8a8"></div>
<svg style="left:700px;top:324px" width="9" height="8"><path d="M0 1h9M0 4h9M0 7h9" stroke="#444" stroke-width="1.4"/></svg>
<div class="a" style="left:696px;top:443px;width:16px;height:17px;border:1px solid #aaa;background:#fff"></div>
<svg style="left:700px;top:449px" width="8" height="5"><path d="M0.5 0.5 L4 4 L7.5 0.5" stroke="#444" fill="none" stroke-width="1.2"/></svg>
<div class="a" style="left:15px;top:460px;width:680px;height:18px;background:#fff;border-top:1px solid #e6e6e6"></div>
<div class="a" style="left:16px;top:460px;width:17px;height:17px;border:1px solid #aaa;background:#fff"></div>
<svg style="left:22px;top:464px" width="5" height="8"><path d="M4.5 0.5 L1 4 L4.5 7.5" stroke="#444" fill="none" stroke-width="1.2"/></svg>
<div class="a" style="left:33px;top:460px;width:397px;height:17px;background:#d9d9d9;border:1px solid #a8a8a8;border-bottom-color:#8c8c8c"></div>
<svg style="left:227px;top:464px" width="9" height="8"><path d="M1 0v8M4.5 0v8M8 0v8" stroke="#444" stroke-width="1.5"/></svg>
<div class="a" style="left:678px;top:460px;width:17px;height:17px;border:1px solid #aaa;background:#fff"></div>
<svg style="left:684px;top:464px" width="5" height="8"><path d="M0.5 0.5 L4 4 L0.5 7.5" stroke="#444" fill="none" stroke-width="1.2"/></svg>
<div class="a" style="left:695px;top:460px;width:18px;height:18px;background:#e8e8e8"></div>
<!-- /grid -->

<!-- tabs -->
<div class="a" style="left:14px;top:515px;width:700px;height:268px;background:#fff;border:1px solid #8c8c8c"></div>
<div class="a" style="left:65px;top:495px;width:136px;height:21px;background:#e6e6e6;border:1px solid #8c8c8c"></div>
<div class="a" style="left:200px;top:495px;width:69px;height:21px;background:#e6e6e6;border:1px solid #8c8c8c"></div>
<div class="a" style="left:268px;top:495px;width:58px;height:21px;background:#e6e6e6;border:1px solid #8c8c8c"></div>
<div class="a" style="left:14px;top:493px;width:52px;height:24px;background:#fff;border:1px solid #8c8c8c;border-bottom:none"></div>
<div class="a" style="left:24px;top:498px;color:#111">Details</div>
<div class="a" style="left:70px;top:499px;color:#111">Production instructions</div>
<div class="a" style="left:206px;top:499px;color:#111">Picking list</div>
<div class="a" style="left:275px;top:499px;color:#111">Pegging</div>
<div class="a" style="left:355px;top:482px;width:17px;height:2px;background:repeating-linear-gradient(90deg,#8a9099 0 2px,transparent 2px 5px)"></div>
<div class="a" style="left:716px;top:498px;width:2px;height:17px;background:repeating-linear-gradient(180deg,#8a9099 0 2px,transparent 2px 5px)"></div>
<!-- details -->
<div id="details"></div>
<div class="a" style="left:26px;top:526px;font-size:12px;line-height:14px;color:#000;font-weight:bold;transform:scaleX(.94);transform-origin:left top">Kanban job</div>
<div class="a" style="left:26px;top:547px;font-size:12px;line-height:14px;color:#4a4a4a;font-weight:normal;">Card number:</div>
<div class="a" style="left:120px;top:547px;font-size:12px;line-height:14px;color:#1f62d4;font-weight:normal;;--p:1;transform:scaleX(0.935);transform-origin:left top">000227</div>
<div class="a" style="left:26px;top:566px;font-size:12px;line-height:14px;color:#4a4a4a;font-weight:normal;">Item number:</div>
<div class="a" style="left:120px;top:566px;font-size:12px;line-height:14px;color:#1f62d4;font-weight:normal;;--p:1;transform:scaleX(0.84);transform-origin:left top">TESTFG</div>
<div class="a" style="left:26px;top:585px;font-size:12px;line-height:14px;color:#4a4a4a;font-weight:normal;">Product name:</div>
<div class="a" style="left:120px;top:585px;font-size:12px;line-height:14px;color:#111;font-weight:normal;;--p:1;transform:scaleX(0.84);transform-origin:left top">TESTFG</div>
<div class="a" style="left:26px;top:603px;font-size:12px;line-height:14px;color:#4a4a4a;font-weight:normal;">Job quantity:</div>
<div class="a" style="left:120px;top:603px;font-size:12px;line-height:14px;color:#111;font-weight:normal;;--p:1;transform:scaleX(0.88);transform-origin:left top">10.00</div>
<div class="a" style="left:26px;top:623px;font-size:12px;line-height:14px;color:#4a4a4a;font-weight:normal;">Job status:</div>
<div class="a" style="left:121px;top:624px;font-size:12px;line-height:14px;color:#111;font-weight:normal;">Planned</div>
<div class="a" style="left:26px;top:642px;font-size:12px;line-height:14px;color:#4a4a4a;font-weight:normal;">Schedule group:</div>
<div class="a" style="left:26px;top:661px;font-size:12px;line-height:14px;color:#4a4a4a;font-weight:normal;">Activity name:</div>
<div class="a" style="left:120px;top:661px;font-size:12px;line-height:14px;color:#111;font-weight:normal;;--p:1;transform:scaleX(0.905);transform-origin:left top">TESTACTIVITY</div>
<div class="a" style="left:26px;top:680px;font-size:12px;line-height:14px;color:#4a4a4a;font-weight:normal;">Warehouse:</div>
<div class="a" style="left:120px;top:680px;font-size:12px;line-height:14px;color:#1f62d4;font-weight:normal;;--p:1;transform:scaleX(0.95);transform-origin:left top">11</div>
<div class="a" style="left:26px;top:699px;font-size:12px;line-height:14px;color:#4a4a4a;font-weight:normal;">Destination:</div>
<div class="a" style="left:120px;top:699px;font-size:12px;line-height:14px;color:#1f62d4;font-weight:normal;;--p:1;transform:scaleX(0.95);transform-origin:left top">11</div>
<div class="a" style="left:26px;top:718px;font-size:12px;line-height:14px;color:#4a4a4a;font-weight:normal;">Due date/time:</div>
<div class="a" style="left:121px;top:718px;font-size:12px;line-height:14px;color:#111;font-weight:normal;">11/1/2016</div>
<div class="a" style="left:204px;top:718px;font-size:12px;line-height:14px;color:#111;font-weight:normal;;--p:1;transform:scaleX(0.93);transform-origin:left top">08:55:59 am</div>
<div class="a" style="left:314px;top:526px;font-size:12px;line-height:14px;color:#000;font-weight:bold;transform:scaleX(.94);transform-origin:left top">Product dimensions</div>
<div class="a" style="left:314px;top:547px;font-size:12px;line-height:14px;color:#4a4a4a;font-weight:normal;">Configuration:</div>
<div class="a" style="left:314px;top:566px;font-size:12px;line-height:14px;color:#4a4a4a;font-weight:normal;">Size:</div>
<div class="a" style="left:314px;top:585px;font-size:12px;line-height:14px;color:#4a4a4a;font-weight:normal;">Color:</div>
<div class="a" style="left:314px;top:604px;font-size:12px;line-height:14px;color:#4a4a4a;font-weight:normal;">Style:</div>
<div class="a" style="left:314px;top:636px;font-size:12px;line-height:14px;color:#4a4a4a;font-weight:normal;">Inventory profile:</div>
<!-- /details -->
<!-- right panel -->
<div class="a" style="left:724px;top:229px;width:554px;height:458px;background:#fff"></div>
<div id="right"></div>
<div class="a" style="left:724px;top:229px;width:554px;height:1px;background:#a0a0a0"></div>
<div class="a" style="left:724px;top:286px;width:554px;height:1px;background:#a0a0a0"></div>
<div class="a" style="left:724px;top:310px;width:554px;height:1px;background:#a0a0a0"></div>
<div class="a" style="left:724px;top:592px;width:554px;height:1px;background:#a0a0a0"></div>
<div class="a" style="left:724px;top:616px;width:554px;height:1px;background:#a0a0a0"></div>
<div class="a" style="left:724px;top:640px;width:554px;height:1px;background:#a0a0a0"></div>
<div class="a" style="left:724px;top:664px;width:554px;height:1px;background:#a0a0a0"></div>
<svg style="left:734px;top:238px" width="7" height="7" viewBox="0 0 7 7"><path d="M6 0.5 V6 H0.5 Z" fill="#444"/></svg>
<div class="a" style="left:748px;top:233px;font-size:13px;line-height:15px;color:#111;font-weight:bold;">Registration</div>
<div class="a" style="left:748px;top:258px;font-size:12px;line-height:14px;color:#555;font-weight:normal;">Kanban card number:</div>
<div class="a" style="left:866px;top:254px;width:134px;height:24px;border:1px solid #7a7a7a;background:#fff"></div>
<svg style="left:733px;top:293px" width="8" height="11" viewBox="0 0 8 11"><path d="M1.5 1 L6.5 5.5 L1.5 10 Z" fill="#fff" stroke="#8a8a8a" stroke-width="1"/></svg>
<div class="a" style="left:748px;top:290px;font-size:13px;line-height:15px;color:#111;font-weight:bold;">Cycle time performance indicator</div>
<svg style="left:734px;top:319px" width="7" height="7" viewBox="0 0 7 7"><path d="M6 0.5 V6 H0.5 Z" fill="#444"/></svg>
<div class="a" style="left:748px;top:314px;font-size:13px;line-height:15px;color:#111;font-weight:bold;">Messages</div>
<div class="a" style="left:748px;top:334px;width:522px;height:245px;border:1px solid #b9cde3;background:#fff"></div>
<div class="a" style="left:766px;top:336px;width:503px;height:19px;background:#fafafa;border-top:1px solid #e4e4e4;border-bottom:1px solid #e4e4e4"></div>
<div class="a" style="left:765px;top:336px;width:3px;height:19px;background:#e4e4e4;border-left:1px solid #f6f6f6;border-right:1px solid #f6f6f6"></div>
<div class="a" style="left:788px;top:336px;width:3px;height:19px;background:#e4e4e4;border-left:1px solid #f6f6f6;border-right:1px solid #f6f6f6"></div>
<div class="a" style="left:1094px;top:336px;width:3px;height:19px;background:#e4e4e4;border-left:1px solid #f6f6f6;border-right:1px solid #f6f6f6"></div>
<div class="a" style="left:751px;top:339px;width:13px;height:13px;border:1px solid #9a9a9a;background:#fff"></div>
<div class="a" style="left:795px;top:339px;font-size:12px;line-height:14px;color:#111;font-weight:normal;">Message</div>
<div class="a" style="left:1101px;top:339px;font-size:12px;line-height:14px;color:#111;font-weight:normal;">Created date and time</div>
<svg style="left:1233px;top:343px" width="8" height="5"><path d="M0 0h8L4 4.5z" fill="#444"/></svg>
<div class="a" style="left:961px;top:357px;font-size:12px;line-height:14px;color:#111;font-weight:normal;">This grid is empty.</div>
<div class="a" style="left:750px;top:560px;width:518px;height:17px;border:1px solid #aaa;background:#fff"></div>
<div class="a" style="left:750px;top:560px;width:17px;height:17px;border:1px solid #aaa;background:#fff"></div>
<svg style="left:756px;top:564px" width="5" height="8"><path d="M4.5 0.5 L1 4 L4.5 7.5" stroke="#444" fill="none" stroke-width="1.2"/></svg>
<div class="a" style="left:767px;top:560px;width:323px;height:17px;background:#dcdcdc;border:1px solid #a8a8a8"></div>
<svg style="left:923px;top:564px" width="9" height="8"><path d="M1 0v8M4.5 0v8M8 0v8" stroke="#444" stroke-width="1.5"/></svg>
<div class="a" style="left:1251px;top:560px;width:17px;height:17px;border:1px solid #aaa;background:#fff"></div>
<svg style="left:1257px;top:564px" width="5" height="8"><path d="M0.5 0.5 L4 4 L0.5 7.5" stroke="#444" fill="none" stroke-width="1.2"/></svg>
<div class="a" style="left:993px;top:588px;width:17px;height:2px;background:repeating-linear-gradient(90deg,#8a9099 0 2px,transparent 2px 5px)"></div>
<svg style="left:733px;top:598px" width="8" height="11" viewBox="0 0 8 11"><path d="M1.5 1 L6.5 5.5 L1.5 10 Z" fill="#fff" stroke="#8a8a8a" stroke-width="1"/></svg>
<div class="a" style="left:748px;top:596px;font-size:13px;line-height:15px;color:#111;font-weight:bold;">Transfer jobs</div>
<svg style="left:733px;top:622px" width="8" height="11" viewBox="0 0 8 11"><path d="M1.5 1 L6.5 5.5 L1.5 10 Z" fill="#fff" stroke="#8a8a8a" stroke-width="1"/></svg>
<div class="a" style="left:748px;top:620px;font-size:13px;line-height:15px;color:#111;font-weight:bold;">Kanban quantity overview - finished goods</div>
<svg style="left:733px;top:646px" width="8" height="11" viewBox="0 0 8 11"><path d="M1.5 1 L6.5 5.5 L1.5 10 Z" fill="#fff" stroke="#8a8a8a" stroke-width="1"/></svg>
<div class="a" style="left:748px;top:644px;font-size:13px;line-height:15px;color:#111;font-weight:bold;">Kanban quantity overview - material</div>
<svg style="left:733px;top:670px" width="8" height="11" viewBox="0 0 8 11"><path d="M1.5 1 L6.5 5.5 L1.5 10 Z" fill="#fff" stroke="#8a8a8a" stroke-width="1"/></svg>
<div class="a" style="left:748px;top:668px;font-size:13px;line-height:15px;color:#111;font-weight:bold;">Job icon legend</div>
<!-- /right -->
<!-- bottom artifacts -->
<div class="a" style="left:1294px;top:37px;width:2px;height:1px;background:#a8b4c0"></div>
<div class="a" style="left:1294px;top:75px;width:2px;height:1px;background:#c8d0d8"></div>
<div class="a" style="left:1294px;top:209px;width:2px;height:1px;background:#b8c8d8"></div>
<div class="a" style="left:1294px;top:363px;width:2px;height:1px;background:#b8c8d8"></div>
<div class="a" style="left:0;top:829px;width:37px;height:2px;background:repeating-linear-gradient(90deg,#333 0 3px,#ccc 3px 5px)"></div>
<div class="a" style="left:37px;top:829px;width:64px;height:2px;background:#e3e7ec"></div>
<div class="a" style="left:101px;top:829px;width:4px;height:2px;background:#9aa0a8"></div>
<!-- status bar -->
<div id="status"></div>
<div class="a" style="left:6px;top:791px;width:1280px;height:1px;background:#8a9099"></div>
<div class="a" style="left:6px;top:792px;width:1280px;height:29px;background:linear-gradient(#f0f4f8,#e0e7f0 2px,#dfe6ef 27px,#e8eef5)"></div>
<svg style="left:22px;top:800px" width="13" height="13" viewBox="0 0 13 13"><rect x="0" y="0.5" width="2" height="12" fill="#1b6ff0"/><path d="M12 0.5 V12.5 L3 6.5Z" fill="#1b6ff0"/></svg>
<svg style="left:48px;top:800px" width="13" height="13" viewBox="0 0 13 13"><path d="M12 0.5 V12.5 L0 6.5Z" fill="#1b6ff0"/></svg>
<svg style="left:74px;top:800px" width="13" height="13" viewBox="0 0 13 13" opacity=".55"><path d="M0 1h13M0 4h13M0 7h13M0 10h13" stroke="#7aa0e0" stroke-width="1.5"/><path d="M4 0v13M8 0v13" stroke="#e3e8ef" stroke-width="1"/></svg>
<svg style="left:100px;top:800px" width="13" height="13" viewBox="0 0 13 13"><path d="M0 0.5 V12.5 L12 6.5Z" fill="#1b6ff0"/></svg>
<svg style="left:124px;top:800px" width="13" height="13" viewBox="0 0 13 13"><path d="M0 0.5 V12.5 L9 6.5Z" fill="#1b6ff0"/><rect x="10" y="0.5" width="2" height="12" fill="#1b6ff0"/></svg>
<div class="a" style="left:147px;top:796px;width:1px;height:22px;background:linear-gradient(rgba(20,50,100,0),#1e3c6e 50%,rgba(20,50,100,0))"></div>
<div class="a" style="left:183px;top:796px;width:1px;height:22px;background:linear-gradient(rgba(20,50,100,0),#1e3c6e 50%,rgba(20,50,100,0))"></div>
<div class="a" style="left:219px;top:796px;width:1px;height:22px;background:linear-gradient(rgba(20,50,100,0),#1e3c6e 50%,rgba(20,50,100,0))"></div>
<div class="a" style="left:1109px;top:796px;width:1px;height:22px;background:linear-gradient(rgba(20,50,100,0),#1e3c6e 50%,rgba(20,50,100,0))"></div>
<div class="a" style="left:154px;top:795px;width:24px;height:24px;background:linear-gradient(#f3e2a9,#f1dfaa);border:1px solid #e8a23a;border-radius:3px"></div>
<svg style="left:157px;top:799px" width="18" height="16" viewBox="0 0 18 16"><path d="M1.5 14.5 L2.5 11 L12.5 1.5 L15 4 L5 13.5 Z" fill="#f5edd8" stroke="#777" stroke-width=".9"/><path d="M12.5 1.5 L15 4 L16 3 L13.5 0.5Z" fill="#e0a0a0"/></svg>
<svg style="left:195px;top:798px" width="14" height="17" viewBox="0 0 14 17" opacity=".6"><path d="M1.5 3.5 H9 L12.5 7 V15.5 H1.5Z" fill="#f2f2f2" stroke="#a8a8a8"/><path d="M3.5 8 V2 Q3.5 0.5 5.5 0.5 Q7.5 0.5 7.5 2 V7" stroke="#999" fill="none"/></svg>
<div class="a" style="left:226px;top:801px;font-size:12px;line-height:14px;color:#222;font-weight:normal;">Identification of the circulating card.</div>
<svg style="left:1119px;top:798px" width="18" height="18" viewBox="0 0 18 18"><defs><linearGradient id="bl" x1="0" y1="0" x2="1" y2="1"><stop offset="0" stop-color="#ffe680"/><stop offset="1" stop-color="#d08a00"/></linearGradient></defs><path d="M3 13 Q5 11 5 7 Q5 2 9 2 Q13 2 13 7 Q13 11 16 13 Z" fill="url(#bl)" stroke="#c07a00" stroke-width=".6"/><rect x="1" y="13" width="16" height="2" rx="1" fill="#d89a10"/><circle cx="9" cy="16" r="1.5" fill="#c07a00"/></svg>
<div class="a" style="left:1137px;top:801px;font-size:12px;line-height:14px;color:#222;font-weight:normal;">(10550)</div>
<div class="a" style="left:1195px;top:795px;width:74px;height:24px;background:#dcdcdc;border:1px solid #707070"></div>
<div class="a" style="left:1217px;top:801px;font-size:12px;line-height:14px;color:#111;font-weight:normal;">Close</div>
<svg style="left:1273px;top:806px" width="12" height="12" viewBox="0 0 12 12" fill="#b5bcc6"><rect x="9" y="0" width="2" height="2"/><rect x="9" y="3" width="2" height="2"/><rect x="6" y="3" width="2" height="2"/><rect x="9" y="6" width="2" height="2"/><rect x="6" y="6" width="2" height="2"/><rect x="3" y="6" width="2" height="2"/><rect x="9" y="9" width="2" height="2"/><rect x="6" y="9" width="2" height="2"/><rect x="3" y="9" width="2" height="2"/><rect x="0" y="9" width="2" height="2"/></svg>
<!-- /status -->
</body></html>
